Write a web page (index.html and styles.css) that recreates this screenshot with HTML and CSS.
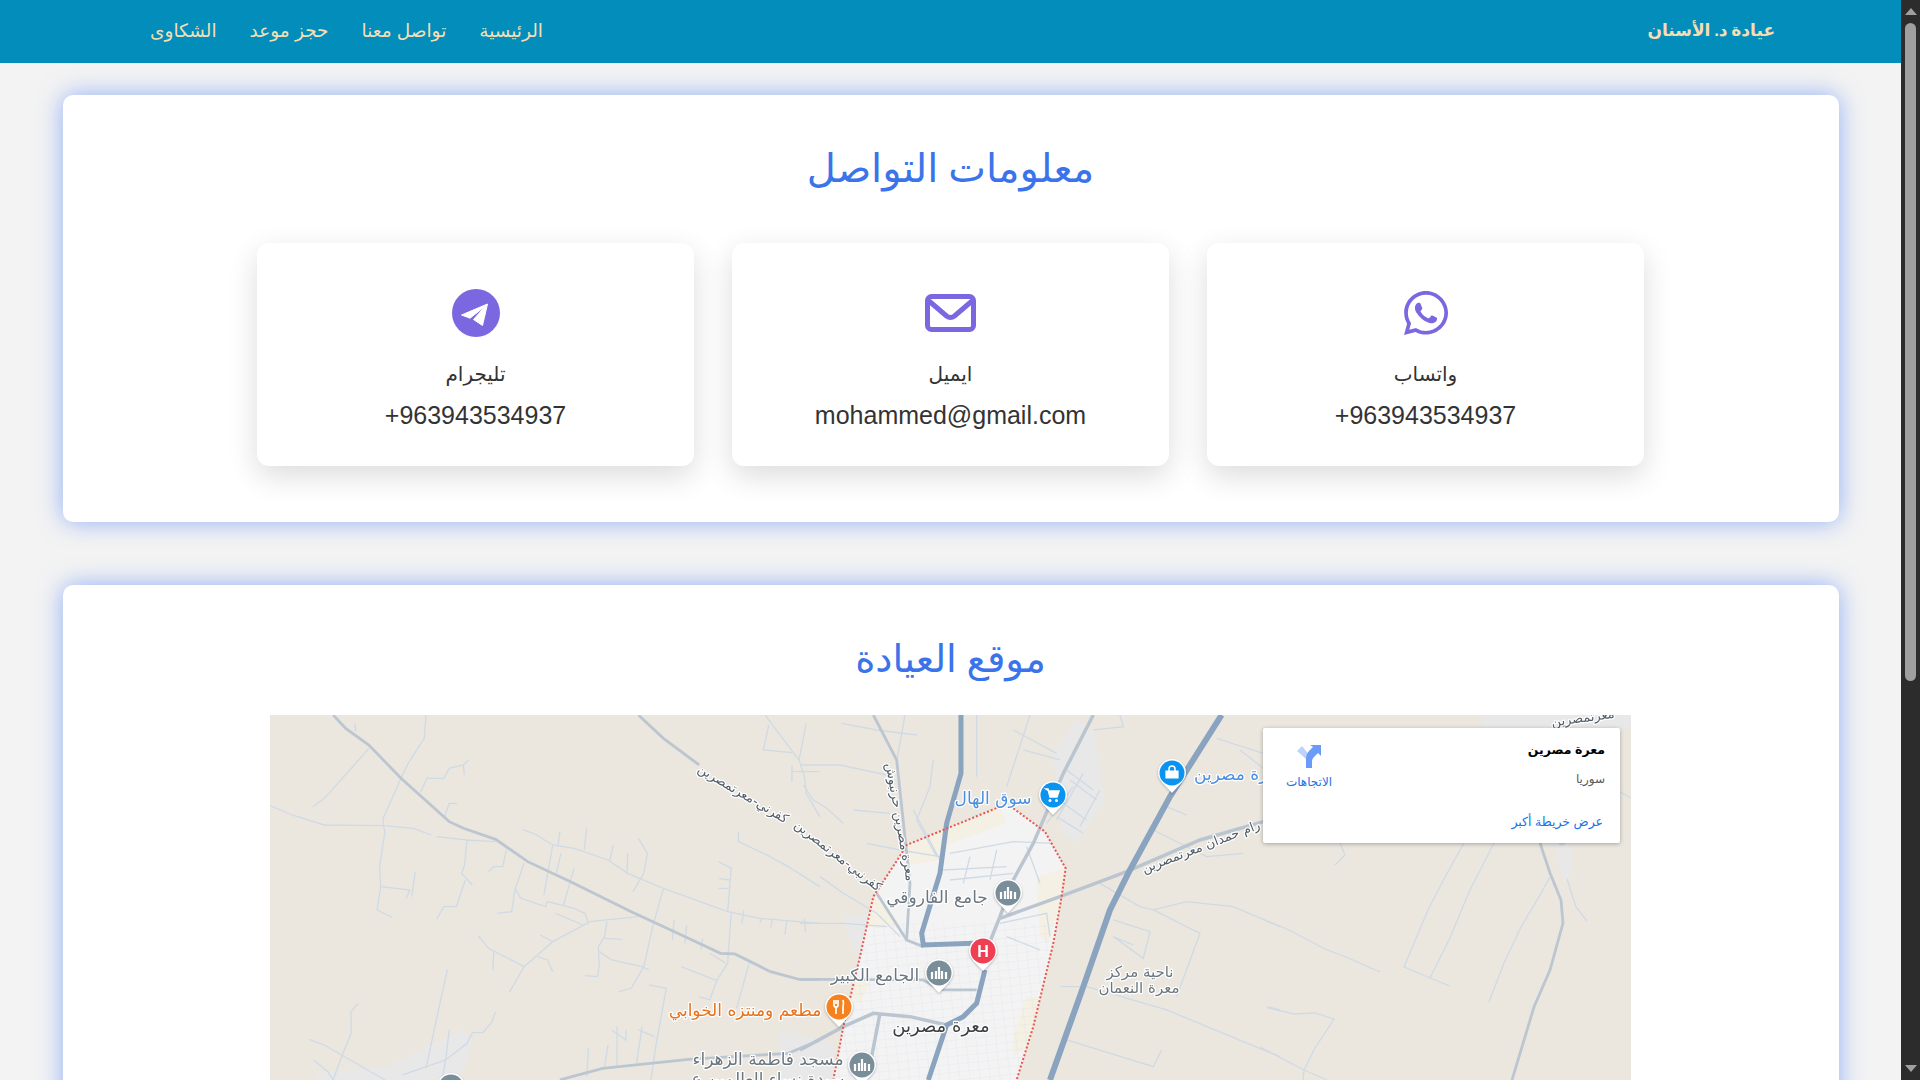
FILE: index.html
```html
<!DOCTYPE html>
<html lang="ar" dir="rtl">
<head>
    <meta charset="UTF-8">
    <title>معلومات التواصل</title>
    <link rel="stylesheet" href="styles.css">
</head>
<body>
<div class="window">
    <div class="page">
        <nav class="nav">
            <a class="brand" href="#">عيادة د. الأسنان</a>
            <ul class="links">
                <li><a href="#">الرئيسية</a></li>
                <li><a href="#">تواصل معنا</a></li>
                <li><a href="#">حجز موعد</a></li>
                <li><a href="#">الشكاوى</a></li>
            </ul>
        </nav>
        <main class="main">
            <section class="panel">
                <h2 class="title">معلومات التواصل</h2>
                <div class="contacts">
                    <div class="contact">
                        <div class="contact-icon">
                            <svg width="44" height="44" viewBox="0 32 448 448"><path fill="#7b68e0" d="M380.9 97.1C339 55.1 283.2 32 223.9 32c-122.4 0-222 99.6-222 222 0 39.1 10.2 77.3 29.6 111L0 480l117.7-30.9c32.4 17.7 68.9 27 106.1 27h.1c122.3 0 224.1-99.6 224.1-222 0-59.3-25.2-115-67.1-157zm-157 341.6c-33.2 0-65.7-8.9-94-25.7l-6.7-4-69.8 18.3L72 359.2l-4.4-7c-18.5-29.4-28.2-63.3-28.2-98.2 0-101.7 82.8-184.5 184.6-184.5 49.3 0 95.6 19.2 130.4 54.1 34.8 34.9 56.2 81.2 56.1 130.5 0 101.8-84.9 184.6-186.6 184.6zm101.2-138.2c-5.5-2.8-32.8-16.2-37.9-18-5.1-1.9-8.8-2.8-12.5 2.8-3.7 5.6-14.3 18-17.6 21.8-3.2 3.7-6.5 4.2-12 1.4-32.6-16.3-54-29.1-75.5-66-5.7-9.8 5.7-9.1 16.3-30.3 1.8-3.7.9-6.9-.5-9.7-1.4-2.8-12.5-30.1-17.1-41.2-4.5-10.8-9.1-9.3-12.5-9.5-3.2-.2-6.9-.2-10.6-.2-3.7 0-9.7 1.4-14.8 6.9-5.1 5.6-19.4 19-19.4 46.3 0 27.3 19.9 53.7 22.6 57.4 2.8 3.7 39.1 59.7 94.8 83.8 35.2 15.2 49 16.5 66.6 13.9 10.7-1.6 32.8-13.4 37.4-26.4 4.6-13 4.6-24.1 3.2-26.4-1.3-2.5-5-3.9-10.5-6.6z"/></svg>
                        </div>
                        <div class="contact-name">واتساب</div>
                        <div class="contact-value" dir="ltr">+963943534937</div>
                    </div>
                    <div class="contact">
                        <div class="contact-icon">
                            <svg width="51" height="38" viewBox="0 0 51 38" fill="none" stroke="#7b68e0" stroke-width="5"><rect x="2.5" y="2.5" width="46" height="33" rx="4"/><path d="M4 7l17.5 15q4 3 8 0L47 7"/></svg>
                        </div>
                        <div class="contact-name">ايميل</div>
                        <div class="contact-value" dir="ltr">mohammed@gmail.com</div>
                    </div>
                    <div class="contact">
                        <div class="contact-icon">
                            <svg width="48" height="48" viewBox="0 0 48 48"><circle cx="24" cy="24" r="24" fill="#7b68e0"/><path fill="#fff" stroke="#fff" stroke-linejoin="round" d="M35.5 15L9.500 26l8.500 3.200L33.500 17 21.500 30.500l9 6z"/></svg>
                        </div>
                        <div class="contact-name">تليجرام</div>
                        <div class="contact-value" dir="ltr">+963943534937</div>
                    </div>
                </div>
            </section>

            <section class="panel">
                <h2 class="title title-map">موقع العيادة</h2>
                <div class="map">
                    <svg class="map-canvas" width="1361" height="450" viewBox="270 715 1361 450">
                        <defs>
                            <pattern id="streets" width="30" height="24" patternUnits="userSpaceOnUse" patternTransform="rotate(-6)">
                                <path d="M0 .5H30M.5 0V24" fill="none" stroke="#d6dfe8" stroke-width="1"/>
                            </pattern>
                        </defs>
                        <rect x="270" y="715" width="1361" height="450" fill="#ebe7df"/>

                        <!-- areas, traced from the crop at 800,710 -->
                        <g transform="translate(800 710) scale(.3333)">
                            <path class="area-grey" d="M830 30L880 60 900 180 915 270 830 400 790 370 760 130zM130 620L300 600 320 700 240 800 150 700zM-60 960L100 1000 100 1110-60 1110z"/>
                            <path class="area-town" d="M320 405L600 290 640 295 735 365 797 475 785 560 760 700 700 950 650 1110H100L130 950 180 740 220 560 305 430z"/>
                            <path class="area-yellow" d="M320 405L600 290 620 340 450 400 420 450 300 470zM220 560L300 640 250 650 205 650zM710 500L797 475 785 560 745 700 720 680zM680 860L720 860 690 1000 640 1040 640 980zM170 800L210 820 180 880 150 860z"/>
                            <path d="M230 640L760 640 700 950 650 1110H100L130 950 180 740z" fill="url(#streets)"/>
                        </g>

                        <!-- minor roads left part -->
                        <g transform="translate(260 710) scale(.357 .3333)" class="roads-minor">
                            <path class="area-grey-line" d="M150 1110L160 1090 360 1070 450 1020 570 960 595 990 560 1110z"/>
                            <path d="M465 15L460 85 415 160 395 205 345 325 345 345 350 365 335 470 338 530 328 600 370 622"/>
                            <path d="M28 287L90 315 180 345 345 347 430 355 480 375"/>
                            <path d="M305 115L235 200 180 265 148 290M265 40L268 65"/>
                            <path d="M495 380L580 390 660 395M580 390L573 465 565 490 595 525M575 510L550 590 515 590 495 627"/>
                            <path d="M470 200L450 245M470 205L515 205 530 175 570 165 585 150M570 165L572 195M515 325L530 280 552 280"/>
                            <path d="M340 530L420 540 410 565M435 485L425 560M690 420L680 470 655 470 640 485"/>
                            <path d="M738 360L770 372 820 405 880 415 975 450 1030 490 1130 535 1310 605 1400 625 1568 640"/>
                            <path d="M840 365L835 405M915 355L908 420M990 405L980 450M1030 430L1028 485M1060 385L1085 430 1075 490 1045 545"/>
                            <path d="M820 405L795 555M843 430L830 490M880 475L850 585M740 460L715 535 705 605 665 610"/>
                            <path d="M715 535L730 565 800 590 805 575 880 595 910 610 920 640M828 610L905 645"/>
                            <path d="M1060 620L925 635 820 695 740 770 698 848M612 678L640 715 740 770M655 725L652 780M785 675L820 695M778 740L805 750 820 785"/>
                            <path d="M972 635L965 680 948 710 950 770 945 800 910 797M965 685L1015 688M950 725L985 750 1070 770 1090 780"/>
                            <path d="M1130 535L1100 650 1075 770 1040 835 1005 845M1090 825L1138 835 1110 1000 1095 1110"/>
                            <path d="M1320 605L1310 760 1280 810 1260 870 1230 860M1285 455L1320 475 1310 605M1285 505L1315 510M1285 535L1312 535"/>
                            <path d="M1340 365L1340 395 1420 435 1480 470 1568 530M1180 770L1280 812M1370 760L1335 895M1260 730L1305 760"/>
                            <path d="M525 780L510 850 465 1075M275 880L255 905 255 970 225 1050 205 1110M138 988L180 1005 350 1110M150 1050L190 1085 205 1110"/>
                            <path d="M660 905L650 935 625 968 595 968 580 1000 520 1050 400 1095M530 960L520 1050 510 1110"/>
                            <path d="M920 1015L915 1100M975 1005L965 1070M1000 950L1000 1070M1025 960L1025 990 985 960M1070 950L1055 1060M1060 960L1105 980"/>
                            <path d="M1415 15L1460 80 1510 150 1525 200 1530 250 1568 320M1425 45L1410 120 1490 128M1530 40L1510 150M1490 165L1490 215M1490 185L1568 185"/>
                            <path d="M1160 630L1155 690M1195 645L1190 700M1240 685L1235 720M1355 600L1350 640M1405 625L1400 640M1435 630L1430 655M1475 635L1470 675M1525 625L1528 665"/>
                        </g>

                        <!-- minor roads middle part -->
                        <g transform="translate(800 710) scale(.3333)" class="roads-minor">
                            <path d="M315 15L300 100 290 150M0 165L120 165 260 195M10 225L40 270 80 295 130 340M160 300L270 310M200 400L300 420 420 440"/>
                            <path d="M60 500L130 550 230 610 300 680M0 640L130 640 260 650M400 150L390 230 350 330 410 440M340 300L420 450"/>
                            <path d="M125 40L230 60 350 75M530 15L530 200M620 230L690 15M670 120L780 150M640 60L770 130"/>
                            <path d="M1250 85L1390 130M1100 290L1160 315M1060 360L1220 440 1330 430M960 15L970 50 880 60"/>
                            <path d="M800 180L880 240M810 210L890 270M770 320L850 370M790 280L860 330M820 230L740 340M850 190L770 330M900 240L840 350"/>
                            <path d="M900 520L1020 590 1060 600 1200 670 1130 860M940 630L1050 665 1030 745 940 680 1000 705"/>
                            <path d="M780 830L860 830 1100 900 1440 1040M800 990L1060 1070 1085 1020M1060 600L1160 575 1300 590 1440 650M1400 890L1440 900"/>
                            <path d="M450 430L640 395 760 400M510 440L490 520M590 420L570 510M680 410L720 520M430 480L620 470M450 510L640 490M600 640L740 610 750 680M620 680L720 720"/>
                        </g>

                        <!-- minor roads right part -->
                        <path class="road-minor" d="M1260 918L1289 930 1325 949 1346 957 1380 972M1464 843L1445 877 1428 910 1404 967 1430 978 1450 986M1494 843L1470 890 1449 940 1430 978M1550 877L1540 895 1521 927 1504 963 1489 1002M1561 860L1576 907 1587 921M1268 1008L1294 1014 1315 1013 1334 1019 1315 1048 1304 1070 1303 1080M1260 1047L1304 1070 1327 1080M1240 750L1263 768M1620 792L1631 798M1340 843L1345 855 1335 865"/>
                        <path class="area-grey" d="M1555 843L1572 843 1572 870 1564 885zM1482 715H1631V728H1482z"/>

                        <!-- grey roads -->
                        <g transform="translate(260 710) scale(.357 .3333)">
                            <path class="road-grey" d="M205 15L240 55 305 105 395 205 530 335 570 355 660 388 750 455 870 515 1040 605 1140 655 1290 730 1330 732 1430 785 1510 808 1568 808"/>
                            <path class="road-grey" d="M840 1110L960 1075 1200 1048 1480 1030 1568 990"/>
                            <path class="road-grey" d="M1060 15L1130 85 1230 165"/>
                        </g>
                        <g transform="translate(800 710) scale(.3333)">
                            <path class="road-grey" d="M0 808H90L370 810 420 840H530"/>
                            <path class="road-grey" d="M220 15L290 150 330 520 320 690 370 710"/>
                            <path class="road-grey" d="M230 550L320 690"/>
                            <path class="road-grey road-wide" d="M880 15L790 190 700 400 640 510 600 620 560 720"/>
                            <path class="road-grey road-wide" d="M600 625L780 560 980 485 1200 390 1390 335"/>
                            <path class="road-grey road-wide" d="M0 1020L130 950 220 910 330 920 440 945M240 910L215 1040"/>
                            <path class="road-main" d="M483 15L483 190 440 340 420 490 380 620 365 670 370 705 520 700M555 780L530 880 490 920 440 945 385 1110"/>
                            <path class="road-main road-high" d="M1265 15L1110 260 990 480 930 600 850 830 750 1110"/>
                        </g>
                        <path class="road-grey" d="M1540 843L1550 873 1561 900 1563 923 1550 970 1534 1007 1512 1080"/>

                        <!-- town boundary -->
                        <g transform="translate(800 710) scale(.3333)">
                            <path class="boundary" d="M600 290L320 405 305 430 220 560 180 740 130 950 100 1110M640 295L735 365 797 475 785 560 760 700 700 950 650 1110"/>
                        </g>

                        <!-- labels -->
                        <text class="label label-road" x="743" y="798" transform="rotate(30.600 743 794)">كفرني-معرتمصرين</text>
                        <text class="label label-road" x="838" y="860" transform="rotate(38 838 856)">كفرنبي-معرتمصرين</text>
                        <text class="label label-road" x="900" y="826" transform="rotate(80 900 822)">معرة مصرين حرنبوش</text>
                        <text class="label label-road" x="1201" y="851" transform="rotate(-21 1201 847)">رام حمدان معرتمصرين</text>
                        <text class="label label-road" x="1583" y="722" transform="rotate(-8 1583 718)">معرتمصرين</text>
                        <text class="label label-blue" x="993" y="804">سوق الهال</text>
                        <text class="label label-blue" x="1240" y="780">معرة مصرين</text>
                        <text class="label label-grey" x="937" y="903">جامع الفاروقي</text>
                        <text class="label label-grey" x="875" y="981">الجامع الكبير</text>
                        <text class="label label-orange" x="745" y="1016">مطعم ومنتزه الخوابي</text>
                        <text class="label label-town" x="941" y="1032">معرة مصرين</text>
                        <text class="label label-grey" x="768" y="1065">مسجد فاطمة الزهراء</text>
                        <text class="label label-grey" x="768" y="1085">سيدة نساء العالمين ع</text>
                        <text class="label label-area" x="1140" y="977">ناحية مركز</text>
                        <text class="label label-area" x="1139" y="993">معرة النعمان</text>

                        <!-- pins -->
                        <g class="pin" transform="translate(1053 795)"><path class="pin-back" d="M-14 0a14 14 0 0 1 28 0c0 7-7 12-14 20-7-8-14-13-14-20z"/><circle r="12.500" fill="#0a93ef"/><path d="M-7-6h2l2 8h7l2-6h-10z" fill="#fff" stroke="#fff" stroke-width="1.500"/><circle cx="-3" cy="5.500" r="1.500" fill="#fff"/><circle cx="3.500" cy="5.500" r="1.500" fill="#fff"/></g>
                        <g class="pin" transform="translate(1172 773)"><path class="pin-back" d="M-14 0a14 14 0 0 1 28 0c0 7-7 12-14 20-7-8-14-13-14-20z"/><circle r="12.500" fill="#0a93ef"/><path d="M-6-2h12v7h-12z" fill="#fff" stroke="#fff" stroke-width="1.200"/><path d="M-3-2v-2a3 3 0 0 1 6 0v2" fill="none" stroke="#fff" stroke-width="1.500"/></g>
                        <g class="pin" transform="translate(1008 893)"><path class="pin-back" d="M-14 0a14 14 0 0 1 28 0c0 7-7 12-14 20-7-8-14-13-14-20z"/><circle r="12.500" fill="#7a8e99"/><path class="pin-mosque" d="M-7 6V-1M-3 6V-2M3 6V-2M7 6V-1M0 6V-6"/></g>
                        <g class="pin" transform="translate(983 951)"><path class="pin-back" d="M-14 0a14 14 0 0 1 28 0c0 7-7 12-14 20-7-8-14-13-14-20z"/><circle r="12.500" fill="#ee3f53"/><text class="pin-letter" y="5.500">H</text></g>
                        <g class="pin" transform="translate(939 973)"><path class="pin-back" d="M-14 0a14 14 0 0 1 28 0c0 7-7 12-14 20-7-8-14-13-14-20z"/><circle r="12.500" fill="#7a8e99"/><path class="pin-mosque" d="M-7 6V-1M-3 6V-2M3 6V-2M7 6V-1M0 6V-6"/></g>
                        <g class="pin" transform="translate(839 1007)"><path class="pin-back" d="M-14 0a14 14 0 0 1 28 0c0 7-7 12-14 20-7-8-14-13-14-20z"/><circle r="12.500" fill="#f5821f"/><path d="M-5-7v5q0 2 2 2v7M-3-7v4M-1-7v5q0 2-2 2M4-7q1 3 0 7v7" fill="none" stroke="#fff" stroke-width="1.700"/></g>
                        <g class="pin" transform="translate(862 1065)"><path class="pin-back" d="M-14 0a14 14 0 0 1 28 0c0 7-7 12-14 20-7-8-14-13-14-20z"/><circle r="12.500" fill="#7a8e99"/><path class="pin-mosque" d="M-7 6V-1M-3 6V-2M3 6V-2M7 6V-1M0 6V-6"/></g>
                        <g class="pin" transform="translate(451 1087)"><path class="pin-back" d="M-14 0a14 14 0 0 1 28 0c0 7-7 12-14 20-7-8-14-13-14-20z"/><circle r="12.500" fill="#7a8e99"/></g>
                        <g class="pin" transform="translate(1562 824)"><path class="pin-back" d="M-14 0a14 14 0 0 1 28 0c0 7-7 12-14 20-7-8-14-13-14-20z"/><circle r="12.500" fill="#ee3f53"/></g>
                    </svg>

                    <div class="place-card">
                        <div class="place-info">
                            <div class="place-name">معرة مصرين</div>
                            <div class="place-country">سوريا</div>
                            <a class="place-link" href="#">عرض خريطة أكبر</a>
                        </div>
                        <a class="place-dir" href="#">
                            <svg width="24" height="24" viewBox="0 0 24 24"><path fill="#bcd4fb" d="M0 6l5-5 9 11v11H9V14z"/><path fill="#6a9bf8" d="M9 23V13q0-4 3-7l4-4-3-2h11v11l-3-3-4 4q-2 2-2 4v7z"/></svg>
                            <span>الاتجاهات</span>
                        </a>
                    </div>
                </div>
            </section>
        </main>
    </div>
    <div class="scrollbar">
        <span class="arrow-up"></span>
        <span class="thumb"></span>
        <span class="arrow-down"></span>
    </div>
</div>
</body>
</html>
```

FILE: styles.css
```css
* {
    box-sizing: border-box;
}
body {
    margin: 0;
    background: #f3f3f3;
    color: #333;
    font-family: "Liberation Sans", "DejaVu Sans", sans-serif;
}
a {
    text-decoration: none;
}
.window {
    display: flex;
    height: 100vh;
    overflow: hidden;
    direction: ltr;
}
.page {
    flex: 1;
    min-width: 0;
    direction: rtl;
}

/* nav */
.nav {
    height: 63px;
    padding: 0 126px 2px 150px;
    background: #028dbb;
    display: flex;
    align-items: center;
    justify-content: space-between;
}
.brand {
    color: #f5deb3;
    font-size: 17px;
    font-weight: bold;
    word-spacing: -1px;
}
.links {
    display: flex;
    gap: 33px;
    list-style: none;
    margin: 0;
    padding: 0;
}
.links a {
    color: #f5deb3;
    font-size: 18.5px;
}

/* panels */
.main {
    padding: 32px 62px 0 63px;
}
.panel {
    background: #fff;
    border-radius: 10px;
    padding: 38px 39px 56px 38px;
    margin-bottom: 63px;
    box-shadow: 0 0 24px rgba(80, 130, 245, 0.6);
}
.title {
    margin: 0 0 40px;
    height: 70px;
    line-height: 72px;
    text-align: center;
    font-size: 40px;
    font-weight: normal;
    color: #3b73ea;
    font-family: "Liberation Serif", "DejaVu Sans", serif;
}
.title-map {
    margin-bottom: 22px;
    font-size: 38.5px;
}

/* contact cards */
.contacts {
    display: flex;
    justify-content: center;
    gap: 38px;
}
.contact {
    width: 437px;
    height: 223px;
    padding-top: 46px;
    background: #fff;
    border-radius: 12px;
    box-shadow: 0 10px 30px rgba(0, 0, 0, 0.14);
    display: flex;
    flex-direction: column;
    align-items: center;
}
.contact-icon {
    height: 48px;
    display: flex;
    align-items: center;
    justify-content: center;
    margin-bottom: 22px;
}
.contact-name {
    font-size: 20px;
    line-height: 30px;
    margin-bottom: 8px;
}
.contact-value {
    font-size: 25px;
    line-height: 36px;
}

/* map */
.map {
    position: relative;
    width: 1361px;
    height: 450px;
    margin: 0 auto;
    overflow: hidden;
}
.map-canvas {
    display: block;
    filter: blur(0.4px);
}
.area-grey {
    fill: #e8e8e9;
}
.area-town {
    fill: #f4f3f4;
}
.area-yellow {
    fill: #f4f0e3;
}
.roads-minor path,
.road-minor {
    fill: none;
    stroke: #cfdae5;
    stroke-width: 1.3;
    vector-effect: non-scaling-stroke;
}
.roads-minor .area-grey-line {
    fill: #e8e8e9;
    stroke: none;
}
.road-grey {
    fill: none;
    stroke: #bcc6d0;
    stroke-width: 2.8;
    vector-effect: non-scaling-stroke;
}
.road-wide {
    stroke: #bac5d0;
    stroke-width: 3.5;
}
.road-main {
    fill: none;
    stroke: #8aa3bf;
    stroke-width: 5;
    vector-effect: non-scaling-stroke;
}
.road-high {
    stroke-width: 6;
}
.boundary {
    fill: none;
    stroke: #e8564e;
    stroke-width: 2;
    stroke-dasharray: 2 2;
    vector-effect: non-scaling-stroke;
}
.label {
    text-anchor: middle;
    font-family: "DejaVu Sans", sans-serif;
    font-size: 14px;
    paint-order: stroke;
    stroke: #fff;
    stroke-width: 2.5px;
    stroke-linejoin: round;
}
.label-road {
    font-size: 13px;
    fill: #4f5b66;
}
.label-blue {
    font-size: 17px;
    fill: #4a8fe0;
}
.label-grey {
    font-size: 17px;
    fill: #6b7780;
}
.label-orange {
    font-size: 17px;
    fill: #e8711a;
}
.label-town {
    font-size: 18px;
    fill: #3c4043;
}
.label-area {
    font-size: 15px;
    fill: #6b7780;
}
.pin-back {
    fill: #fff;
    filter: drop-shadow(0 1px 1px rgba(0, 0, 0, 0.25));
}
.pin-mosque {
    fill: none;
    stroke: #fff;
    stroke-width: 2.2;
}
.pin-letter {
    fill: #fff;
    font: bold 16px "Liberation Sans", sans-serif;
    text-anchor: middle;
}

/* place card over the map */
.place-card {
    position: absolute;
    top: 13px;
    left: 993px;
    width: 357px;
    height: 115px;
    padding: 12px 15px 0 22px;
    background: #fff;
    border-radius: 2px;
    box-shadow: 0 1px 4px rgba(0, 0, 0, 0.3);
    display: flex;
    justify-content: space-between;
}
.place-name {
    color: #000;
    font-size: 12.5px;
    font-weight: bold;
    line-height: 20px;
    margin-bottom: 11px;
}
.place-country {
    color: #5b5b5b;
    font-size: 12px;
    line-height: 16px;
    margin-bottom: 25px;
}
.place-link {
    color: #1a73e8;
    font-size: 12.5px;
    line-height: 16px;
    margin-right: 2px;
}
.place-dir {
    color: #1a73e8;
    font-size: 12px;
    width: 48px;
    display: flex;
    flex-direction: column;
    align-items: center;
    gap: 6px;
    padding-top: 5px;
}

/* scrollbar */
.scrollbar {
    width: 19px;
    background: #2c2c2c;
    display: flex;
    flex-direction: column;
    align-items: center;
}
.arrow-up {
    margin-top: 8px;
    border-left: 6px solid transparent;
    border-right: 6px solid transparent;
    border-bottom: 7px solid #a0a0a0;
}
.thumb {
    width: 11px;
    height: 658px;
    margin-top: 8px;
    background: #9f9f9f;
    border-radius: 6px;
}
.arrow-down {
    margin-top: auto;
    margin-bottom: 8px;
    border-left: 6px solid transparent;
    border-right: 6px solid transparent;
    border-top: 7px solid #a0a0a0;
}
```
